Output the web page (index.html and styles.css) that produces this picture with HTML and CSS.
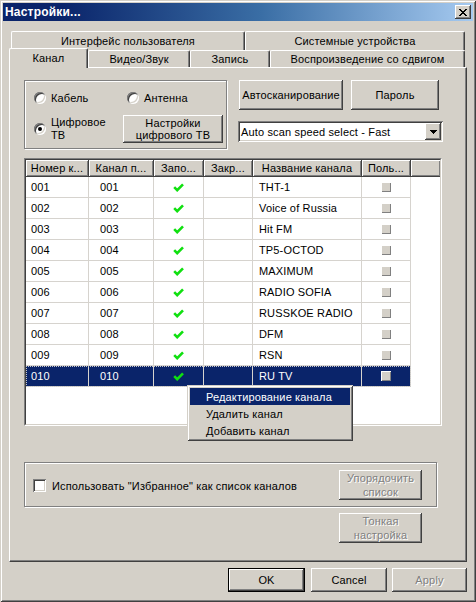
FILE: index.html
```html
<!DOCTYPE html>
<html>
<head>
<meta charset="utf-8">
<title>Настройки</title>
<link rel="stylesheet" href="styles.css">
</head>
<body>
<div class="window">
  <div class="titlebar">
    <span class="title">Настройки...</span>
    <span class="close"><svg width="8" height="7" viewBox="0 0 8 7"><path fill="#000" d="M0 0h2v1H0zM6 0h2v1H6zM1 1h2v1H1zM5 1h2v1H5zM2 2h4v1H2zM3 3h2v1H3zM2 4h4v1H2zM1 5h2v1H1zM5 5h2v1H5zM0 6h2v1H0zM6 6h2v1H6z"/></svg></span>
  </div>

  <div class="tabs">
    <div class="tabrow back">
      <div class="tab w-iface">Интерфейс пользователя</div>
      <div class="tab w-sys">Системные устройства</div>
    </div>
    <div class="tabrow front">
      <div class="tab sel w-chan">Канал</div>
      <div class="tab w-video">Видео/Звук</div>
      <div class="tab w-rec">Запись</div>
      <div class="tab w-shift">Воспроизведение со сдвигом</div>
    </div>
  </div>

  <div class="panel">
    <div class="toprow">
      <div class="radiogroup">
        <div class="rrow">
          <label class="ropt first"><span class="radio"></span><span class="rtext">Кабель</span></label>
          <label class="ropt"><span class="radio"></span><span class="rtext">Антенна</span></label>
        </div>
        <div class="rrow2">
          <label class="ropt second"><span class="radio on"></span><span class="rtext">Цифровое<br>ТВ</span></label>
          <div class="btn btn-dtv">Настройки<br>цифрового ТВ</div>
        </div>
      </div>
      <div class="rightcol">
        <div class="btnrow">
          <div class="btn btn-auto">Автосканирование</div>
          <div class="btn btn-pass">Пароль</div>
        </div>
        <div class="combo">
          <span class="combo-text">Auto scan speed select - Fast</span>
          <span class="combo-arrow"><svg width="7" height="4" viewBox="0 0 7 4"><path fill="#000" d="M0 0h7v1H0zM1 1h5v1H1zM2 2h3v1H2zM3 3h1v1H3z"/></svg></span>
        </div>
      </div>
    </div>

    <div class="list">
      <div class="list-inner">
        <div class="lhead">
          <div class="hc c1">Номер к...</div>
          <div class="hc c2">Канал п...</div>
          <div class="hc c3">Запо...</div>
          <div class="hc c4">Закр...</div>
          <div class="hc c5">Название канала</div>
          <div class="hc c6">Поль...</div>
          <div class="hc filler"></div>
        </div>
        <div class="lrow"><div class="t1">001</div><div class="t2">001</div><div class="t3"><svg class="chk" width="11" height="9" viewBox="0 0 11 9"><polyline points="1.2,4.2 4.2,7.2 10,1.4" fill="none" stroke="#10e010" stroke-width="2.6"/></svg></div><div></div><div class="t5">THT-1</div><div class="t6"><span class="minibox"></span></div></div>
        <div class="lrow"><div class="t1">002</div><div class="t2">002</div><div class="t3"><svg class="chk" width="11" height="9" viewBox="0 0 11 9"><polyline points="1.2,4.2 4.2,7.2 10,1.4" fill="none" stroke="#10e010" stroke-width="2.6"/></svg></div><div></div><div class="t5">Voice of Russia</div><div class="t6"><span class="minibox"></span></div></div>
        <div class="lrow"><div class="t1">003</div><div class="t2">003</div><div class="t3"><svg class="chk" width="11" height="9" viewBox="0 0 11 9"><polyline points="1.2,4.2 4.2,7.2 10,1.4" fill="none" stroke="#10e010" stroke-width="2.6"/></svg></div><div></div><div class="t5">Hit FM</div><div class="t6"><span class="minibox"></span></div></div>
        <div class="lrow"><div class="t1">004</div><div class="t2">004</div><div class="t3"><svg class="chk" width="11" height="9" viewBox="0 0 11 9"><polyline points="1.2,4.2 4.2,7.2 10,1.4" fill="none" stroke="#10e010" stroke-width="2.6"/></svg></div><div></div><div class="t5">TP5-OCTOD</div><div class="t6"><span class="minibox"></span></div></div>
        <div class="lrow"><div class="t1">005</div><div class="t2">005</div><div class="t3"><svg class="chk" width="11" height="9" viewBox="0 0 11 9"><polyline points="1.2,4.2 4.2,7.2 10,1.4" fill="none" stroke="#10e010" stroke-width="2.6"/></svg></div><div></div><div class="t5">MAXIMUM</div><div class="t6"><span class="minibox"></span></div></div>
        <div class="lrow"><div class="t1">006</div><div class="t2">006</div><div class="t3"><svg class="chk" width="11" height="9" viewBox="0 0 11 9"><polyline points="1.2,4.2 4.2,7.2 10,1.4" fill="none" stroke="#10e010" stroke-width="2.6"/></svg></div><div></div><div class="t5">RADIO SOFIA</div><div class="t6"><span class="minibox"></span></div></div>
        <div class="lrow"><div class="t1">007</div><div class="t2">007</div><div class="t3"><svg class="chk" width="11" height="9" viewBox="0 0 11 9"><polyline points="1.2,4.2 4.2,7.2 10,1.4" fill="none" stroke="#10e010" stroke-width="2.6"/></svg></div><div></div><div class="t5">RUSSKOE RADIO</div><div class="t6"><span class="minibox"></span></div></div>
        <div class="lrow"><div class="t1">008</div><div class="t2">008</div><div class="t3"><svg class="chk" width="11" height="9" viewBox="0 0 11 9"><polyline points="1.2,4.2 4.2,7.2 10,1.4" fill="none" stroke="#10e010" stroke-width="2.6"/></svg></div><div></div><div class="t5">DFM</div><div class="t6"><span class="minibox"></span></div></div>
        <div class="lrow"><div class="t1">009</div><div class="t2">009</div><div class="t3"><svg class="chk" width="11" height="9" viewBox="0 0 11 9"><polyline points="1.2,4.2 4.2,7.2 10,1.4" fill="none" stroke="#10e010" stroke-width="2.6"/></svg></div><div></div><div class="t5">RSN</div><div class="t6"><span class="minibox"></span></div></div>
        <div class="lrow sel"><div class="t1">010</div><div class="t2">010</div><div class="t3"><svg class="chk" width="11" height="9" viewBox="0 0 11 9"><polyline points="1.2,4.2 4.2,7.2 10,1.4" fill="none" stroke="#10e010" stroke-width="2.6"/></svg></div><div></div><div class="t5">RU TV</div><div class="t6"><span class="minibox"></span></div></div>
      </div>
    </div>

    <div class="favgroup">
      <span class="checkbox"></span>
      <span class="favtext">Использовать "Избранное" как список каналов</span>
      <div class="btn btn-sort dis">Упорядочить<br>список</div>
    </div>

    <div class="btn btn-fine dis">Тонкая<br>настройка</div>
  </div>

  <div class="dlg-buttons">
    <div class="btn default btn-ok">OK</div>
    <div class="btn btn-cancel">Cancel</div>
    <div class="btn btn-apply dis">Apply</div>
  </div>

  <div class="ctxmenu">
    <div class="mi hl">Редактирование канала</div>
    <div class="mi">Удалить канал</div>
    <div class="mi">Добавить канал</div>
  </div>
</div>
</body>
</html>
```

FILE: styles.css
```css
* { box-sizing: border-box; }
html, body { margin: 0; padding: 0; }
body {
  width: 476px;
  height: 602px;
  overflow: hidden;
  background: #d4d0c8;
  font-family: "Liberation Sans", Arial, sans-serif;
  font-size: 11px;
  letter-spacing: 0.15px;
  color: #000;
}

.window {
  position: relative;
  width: 476px;
  height: 602px;
  padding: 3px;
  background: #d4d0c8;
  box-shadow: inset 1px 1px #d4d0c8, inset -1px -1px #404040, inset 2px 2px #fff, inset -2px -2px #808080;
}

.titlebar {
  height: 18px;
  background: linear-gradient(to right, #0a246a 0%, #0a246a 12%, #3a6ea5 55%, #a6caf0 100%);
  display: flex;
  align-items: center;
  justify-content: space-between;
  padding: 0 2px 0 2px;
}
.title { color: #fff; font-weight: bold; font-size: 12px; letter-spacing: 0.2px; }
.close {
  width: 16px;
  height: 14px;
  background: #d4d0c8;
  box-shadow: inset -1px -1px #404040, inset 1px 1px #fff, inset -2px -2px #808080;
  display: flex;
  align-items: center;
  justify-content: center;
}
.close svg { display: block; }

/* tabs */
.tabs { margin: 10px 0 0 6px; }
.tabrow { display: flex; }
.tabrow.back { padding-left: 2px; height: 19px; }
.tabrow.front { height: 17px; }
.tab {
  height: 19px;
  background: #d4d0c8;
  border-top: 1px solid #fff;
  border-left: 1px solid #fff;
  border-right: 1px solid #404040;
  box-shadow: inset -1px 0 #808080;
  border-radius: 2px 2px 0 0;
  display: flex;
  align-items: center;
  justify-content: center;
  white-space: nowrap;
}
.tabrow.front .tab { height: 17px; }
.tabrow.front .tab.sel {
  height: 20px;
  margin-top: -2px;
  position: relative;
  z-index: 1;
  padding-bottom: 2px;
}
.w-iface { width: 234px; }
.w-sys { width: 220px; }
.w-chan { width: 79px; }
.w-video { width: 102px; }
.w-rec { width: 80px; }
.w-shift { width: 195px; }

/* panel */
.panel {
  margin-left: 6px;
  width: 458px;
  height: 495px;
  border-top: 1px solid #fff;
  border-left: 1px solid #fff;
  border-right: 1px solid #404040;
  border-bottom: 1px solid #404040;
  box-shadow: inset -1px -1px #808080;
  padding: 12px 0 0 14px;
}

/* generic controls */
.btn {
  background: #d4d0c8;
  box-shadow: inset -1px -1px #404040, inset 1px 1px #fff, inset -2px -2px #808080;
  display: flex;
  align-items: center;
  justify-content: center;
  text-align: center;
  line-height: 12px;
  flex: none;
}
.btn.default {
  box-shadow: inset 0 0 0 1px #000, inset -2px -2px #404040, inset 2px 2px #fff, inset -3px -3px #808080;
}
.dis { color: #808080; text-shadow: 1px 1px 0 #fff; }

/* top row */
.toprow { display: flex; height: 69px; }
.radiogroup {
  width: 203px;
  height: 69px;
  border: 1px solid #808080;
  box-shadow: inset 1px 1px #fff, 1px 1px #fff;
  padding: 11px 0 0 9px;
}
.rrow { display: flex; align-items: center; height: 12px; }
.rrow2 { display: flex; align-items: center; height: 28px; margin-top: 11px; }
.ropt { display: flex; align-items: center; }
.ropt.first { width: 93px; }
.ropt.second { width: 89px; }
.rtext { margin-left: 5px; line-height: 13px; }
.radio {
  width: 12px;
  height: 12px;
  border-radius: 50%;
  background: #fff;
  box-shadow: inset 1px 1px #808080, inset -1px -1px #fff, inset 2px 2px #404040, inset -2px -2px #d4d0c8;
  flex: none;
  display: flex;
  align-items: center;
  justify-content: center;
}
.radio.on::after {
  content: "";
  width: 4px;
  height: 4px;
  border-radius: 50%;
  background: #000;
}
.btn-dtv { width: 100px; height: 28px; }

.rightcol { margin-left: 12px; }
.btnrow { display: flex; gap: 8px; }
.btn-auto { width: 104px; height: 30px; }
.btn-pass { width: 88px; height: 30px; }
.combo {
  margin: 11px 0 0 -1px;
  width: 205px;
  height: 21px;
  padding: 2px;
  background: #fff;
  box-shadow: inset 1px 1px #808080, inset -1px -1px #fff, inset 2px 2px #404040, inset -2px -2px #d4d0c8;
  display: flex;
  align-items: center;
}
.combo-text { flex: 1; padding-left: 1px; white-space: nowrap; }
.combo-arrow {
  width: 16px;
  height: 17px;
  background: #d4d0c8;
  box-shadow: inset -1px -1px #404040, inset 1px 1px #fff, inset -2px -2px #808080;
  display: flex;
  align-items: center;
  justify-content: center;
}
.combo-arrow svg { display: block; }

/* list */
.list {
  margin-top: 9px;
  width: 418px;
  height: 268px;
  border: 1px solid;
  border-color: #808080 #fff #fff #808080;
}
.list-inner {
  height: 100%;
  border: 1px solid;
  border-color: #404040 #d4d0c8 #d4d0c8 #404040;
  background: #fff;
  overflow: hidden;
}
.lhead { display: flex; height: 17px; }
.hc {
  height: 17px;
  background: #d4d0c8;
  border-right: 1px solid #404040;
  border-bottom: 1px solid #404040;
  box-shadow: inset 1px 1px #fff, inset -1px -1px #808080;
  display: flex;
  align-items: center;
  justify-content: center;
  white-space: nowrap;
  overflow: hidden;
  flex: none;
}
.hc.c1 { width: 63px; }
.hc.c2 { width: 65px; }
.hc.c3 { width: 50px; }
.hc.c4 { width: 49px; }
.hc.c5 { width: 109px; }
.hc.c6 { width: 49px; }
.hc.filler { flex: 1; border-right: 0; }

.lrow {
  display: grid;
  grid-template-columns: 63px 65px 50px 49px 109px 49px;
  width: 385px;
  height: 21px;
}
.lrow > div {
  border-right: 1px solid #d6d3ce;
  border-bottom: 1px solid #d6d3ce;
  display: flex;
  align-items: center;
  white-space: nowrap;
}
.lrow .t1 { padding-left: 5px; }
.lrow .t2 { padding-left: 11px; }
.lrow .t3 { justify-content: center; }
.lrow .t5 { padding-left: 6px; }
.lrow .t6 { justify-content: center; }
.chk { display: block; }
.minibox {
  width: 10px;
  height: 10px;
  background: #d4d0c8;
  box-shadow: inset 1px 1px #fff, inset -1px -1px #808080;
}
.lrow.sel {
  background: #0a246a;
  color: #fff;
  outline: 1px dotted #c8c8c8;
  outline-offset: -1px;
}

/* favourites */
.favgroup {
  margin-top: 36px;
  width: 413px;
  height: 45px;
  border: 1px solid #808080;
  box-shadow: inset 1px 1px #fff, 1px 1px #fff;
  display: flex;
  align-items: center;
  padding-left: 8px;
}
.checkbox {
  width: 13px;
  height: 13px;
  flex: none;
  background: #fff;
  box-shadow: inset 1px 1px #808080, inset -1px -1px #fff, inset 2px 2px #404040, inset -2px -2px #d4d0c8;
  margin-top: 2px;
}
.favtext { margin-left: 6px; margin-top: 2px; white-space: nowrap; }
.btn-sort { width: 83px; height: 30px; margin-left: auto; margin-right: 14px; line-height: 14px; }
.btn-fine { width: 83px; height: 30px; margin: 6px 0 0 315px; line-height: 14px; }

/* dialog buttons */
.dlg-buttons {
  display: flex;
  justify-content: flex-end;
  margin-top: 6px;
  padding-right: 6px;
}
.btn-ok { width: 77px; height: 24px; }
.btn-cancel { width: 76px; height: 24px; margin-left: 6px; }
.btn-apply { width: 75px; height: 24px; margin-left: 5px; }

/* context menu */
.ctxmenu {
  position: absolute;
  left: 187px;
  top: 385px;
  width: 166px;
  padding: 3px 3px 2px;
  background: #d4d0c8;
  box-shadow: inset 1px 1px #d4d0c8, inset -1px -1px #404040, inset 2px 2px #fff, inset -2px -2px #808080;
}
.mi {
  height: 17px;
  padding-left: 16px;
  display: flex;
  align-items: center;
  white-space: nowrap;
}
.mi.hl { background: #0a246a; color: #fff; }
```
